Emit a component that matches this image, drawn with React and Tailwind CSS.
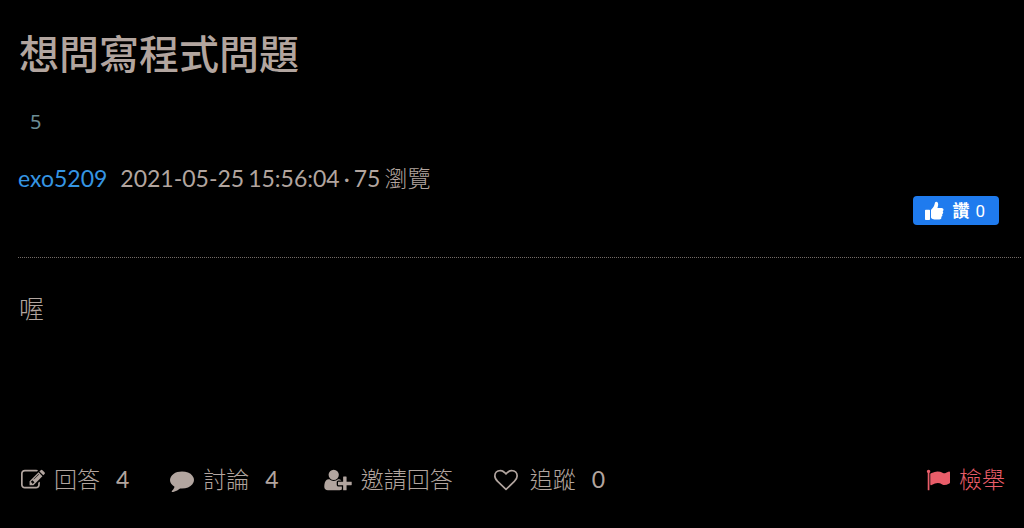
function Glyph({ viewBox = '0 0 1792 1792', className, d }) {
  return (
    <svg viewBox={viewBox} className={className} fill="currentColor" aria-hidden="true">
      <path d={d} />
    </svg>
  );
}

const paths = {
  thumb: 'M1 9.5q0-.8.8-.8h3.400q.8 0 .8.8v8.700q0 .8-.8.8h-3.400q-.8 0-.8-.8zM7 9.400q0-.7.5-1.200c1.700-1.600 2.800-3.300 3.200-5.500.2-1.300.6-2 1.500-2 1.400 0 2 1.300 2 2.700 0 1.300-.4 2.400-.8 3.500h4.200c1.200 0 1.900.8 1.900 1.800 0 .8-.4 1.300-.9 1.600.4.300.6.800.6 1.300 0 .9-.5 1.400-1.100 1.700.2.300.3.600.3 1 0 .8-.5 1.300-1.200 1.600.1.200.2.500.2.800 0 1-.8 1.700-2 1.700h-3.700c-1.700 0-3-.4-4-1q-.7-.4-.7-1.200z',
  edit: 'M888 1184l116-116-152-152-116 116v56h96v96h56zm440-720q-16-16-33 1l-350 350q-17 17-1 33t33-1l350-350q17-17 1-33zm80 594v190q0 119-84.5 203.5t-203.5 84.5h-832q-119 0-203.5-84.5t-84.5-203.5v-832q0-119 84.5-203.5t203.5-84.5h832q63 0 117 25 15 7 18 23 3 17-9 29l-49 49q-14 14-32 8-23-6-45-6h-832q-66 0-113 47t-47 113v832q0 66 47 113t113 47h832q66 0 113-47t47-113v-126q0-13 9-22l64-64q15-15 35-7t20 29zm-96-738l288 288-672 672h-288v-288zm444 132l-92 92-288-288 92-92q28-28 68-28t68 28l152 152q28 28 28 68t-28 68z',
  comment: 'M1792 896q0 174-120 321.5t-326 233-450 85.5q-70 0-145-8-198 175-460 242-49 14-114 22-17 2-30.5-9t-17.5-29v-1q-3-4-.5-12t2-10 4.5-9.5l6-9 7-8.5 8-9q7-8 31-34.5t34.5-38 31-39.5 32.5-51 27-59 26-76q-157-89-247.5-220t-90.5-281q0-130 71-248.5t191-204.5 286-136.5 348-50.5q244 0 450 85.5t326 233 120 321.5z',
  invite: 'M704 896q-159 0-271.5-112.5t-112.5-271.5 112.5-271.5 271.5-112.5 271.5 112.5 112.5 271.5-112.5 271.5-271.5 112.5zm960 128h352q13 0 22.5 9.5t9.5 22.5v192q0 13-9.5 22.5t-22.5 9.5h-352v352q0 13-9.5 22.5t-22.5 9.5h-192q-13 0-22.5-9.5t-9.5-22.5v-352h-352q-13 0-22.5-9.5t-9.5-22.5v-192q0-13 9.5-22.5t22.5-9.5h352v-352q0-13 9.5-22.5t22.5-9.5h192q13 0 22.5 9.5t9.5 22.5v352zm-736 224q0 52 38 90t90 38h256v238q-68 50-171 50h-874q-121 0-194-69t-73-190q0-53 3.5-103.5t14-109 26.5-108.5 43-97.5 62-81 85.5-53.5 111.5-20q19 0 39 17 79 61 154.5 91.5t164.5 30.5 164.5-30.5 154.5-91.5q20-17 39-17 132 0 217 96h-223q-52 0-90 38t-38 90v192z',
  heart: 'M1664 596q0-81-21.5-143t-55-98.5-81.5-59.5-94-31-98-8-112 25.5-110.5 64-86.5 72-60 61.5q-18 22-49 22t-49-22q-24-28-60-61.5t-86.5-72-110.5-64-112-25.5-98 8-94 31-81.5 59.5-55 98.5-21.5 143q0 168 187 355l581 560 580-559q188-188 188-356zm128 0q0 221-229 450l-623 600q-18 18-44 18t-44-18l-624-602q-10-8-27.5-26t-55.5-65.5-68-97.5-53.5-121-23.5-138q0-220 127-344t351-124q62 0 126.5 21.5t120 58 95.5 68.5 76 68q36-36 76-68t95.5-68.5 120-58 126.5-21.5q224 0 351 124t127 344z',
  flag: 'M320 256q0 72-64 110v1266q0 13-9.5 22.5t-22.5 9.5h-64q-13 0-22.5-9.5t-9.5-22.5v-1266q-64-38-64-110 0-53 37.5-90.5t90.5-37.5 90.5 37.5 37.5 90.5zm1472 64v763q0 25-12.5 38.5t-39.5 27.5q-215 116-369 116-61 0-123.5-22t-108.5-48-115.5-48-142.5-22q-192 0-464 146-17 9-33 9-26 0-45-19t-19-45v-742q0-32 31-55 21-14 79-43 236-120 421-120 107 0 200 29t219 88q38 19 88 19 54 0 117.5-21t110-47 88-47 54.5-21q26 0 45 19t19 45z',
};

function Action({ icon, label, count, spacing = 'gap-[9px]' }) {
  return (
    <button type="button" className={`flex items-center whitespace-nowrap ${spacing}`}>
      <span className="pt-0.5">{icon}</span>
      <span className="font-light">{label}</span>
      {count !== undefined && <span className={spacing === 'gap-3' ? 'ml-1' : 'ml-[7px]'}>{count}</span>}
    </button>
  );
}

export default function App() {
  return (
    <main className="min-h-screen bg-black pt-7 pl-[18px] pb-8 font-['Lato','Noto_Sans_CJK_TC',sans-serif] text-[23px] leading-8 text-[#b2a59f]">
      <h1 className="pl-px text-[40px] leading-[52px] font-medium">想問寫程式問題</h1>
      <div className="mt-[26px] pl-3 font-['Noto_Sans',sans-serif] text-xl leading-8 text-[#6c8d96]">5</div>
      <div className="mt-6 flex items-center gap-[13px]">
        <a href="#exo5209" className="text-[#3595e3]">exo5209</a>
        <p className="flex flex-wrap gap-x-1">
          <time dateTime="2021-05-25T15:56:04" className="flex gap-1">
            <span>2021-05-25</span>
            <span>15:56:04</span>
          </time>
          <span>·</span>
          <span>75</span>
          <span className="font-light">瀏覽</span>
        </p>
      </div>
      <div className="flex justify-end pt-0.5 pr-[25px]">
        <button
          type="button"
          className="flex h-[29px] items-center gap-2 rounded bg-[#1f7bee] pr-3.5 pl-[11px] font-['Roboto','Noto_Sans_CJK_TC',sans-serif] text-[17px] leading-7 text-white"
        >
          <Glyph viewBox="0 0 20 20" className="size-5" d={paths.thumb} />
          <span className="flex gap-1.5">
            <span className="font-bold">讚</span>
            <span>0</span>
          </span>
        </button>
      </div>
      <hr className="mt-8 mr-[3px] border-0 border-t border-dotted border-[#736b67]" />
      <p className="mt-8 min-h-[173px] pl-px text-[25px] leading-9 font-light">喔</p>
      <div className="flex items-center pr-[19px] pl-[3px]">
        <div className="flex items-center gap-[41px]">
          <Action icon={<Glyph className="size-6" d={paths.edit} />} label="回答" count={4} />
          <Action icon={<Glyph className="size-6" d={paths.comment} />} label="討論" count={4} />
          <div className="pl-1">
            <Action icon={<Glyph viewBox="0 0 2048 1792" className="h-6 w-7" d={paths.invite} />} label="邀請回答" />
          </div>
          <Action icon={<Glyph className="size-6" d={paths.heart} />} label="追蹤" count={0} spacing="gap-3" />
        </div>
        <div className="ml-auto text-[#e95d69]">
          <Action icon={<Glyph className="size-6" d={paths.flag} />} label="檢舉" />
        </div>
      </div>
    </main>
  );
}
